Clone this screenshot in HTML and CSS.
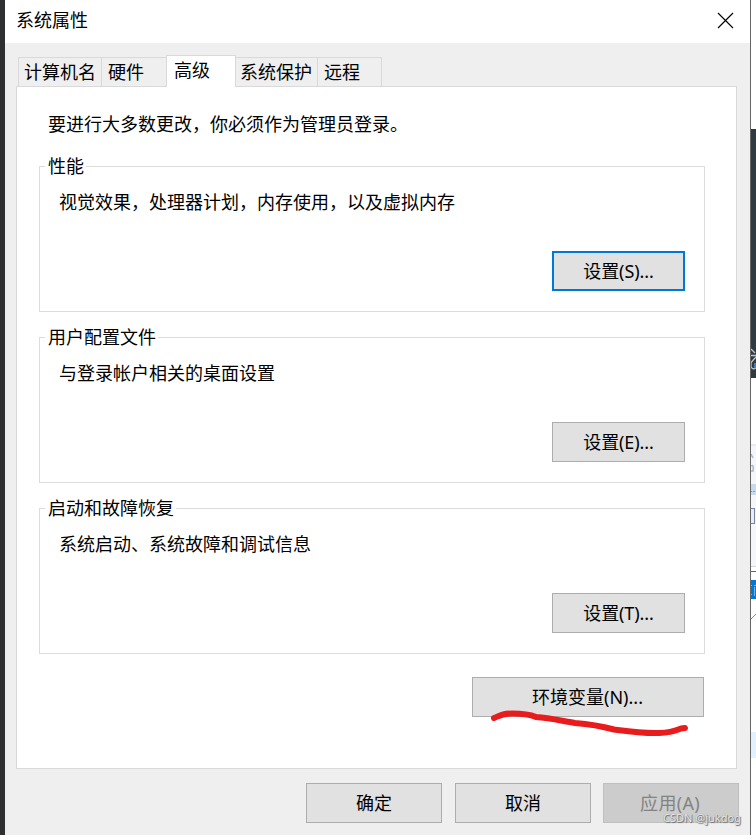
FILE: index.html
```html
<!DOCTYPE html>
<html lang="zh-CN">
<head>
<meta charset="utf-8">
<title>系统属性</title>
<link rel="stylesheet" href="styles.css">
</head>
<body>
<div class="desktop">
  <main class="dialog">
    <header class="titlebar">
      <h1 class="title">系统属性</h1>
      <svg class="close" width="17" height="17" viewBox="0 0 17 17"><path d="M1 1L16 16M16 1L1 16" stroke="#000" stroke-width="1.15" fill="none"/></svg>
    </header>
    <nav class="tabs">
      <span class="tab tab-name">计算机名</span>
      <span class="tab tab-hardware">硬件</span>
      <span class="tab tab-active">高级</span>
      <span class="tab tab-protect">系统保护</span>
      <span class="tab tab-remote">远程</span>
    </nav>
    <section class="panel">
      <p class="intro">要进行大多数更改，你必须作为管理员登录。</p>
      <section class="group">
        <h2 class="legend">性能</h2>
        <p class="desc">视觉效果，处理器计划，内存使用，以及虚拟内存</p>
        <button class="btn btn-settings btn-focus">设置(S)...</button>
      </section>
      <section class="group">
        <h2 class="legend">用户配置文件</h2>
        <p class="desc">与登录帐户相关的桌面设置</p>
        <button class="btn btn-settings">设置(E)...</button>
      </section>
      <section class="group">
        <h2 class="legend">启动和故障恢复</h2>
        <p class="desc">系统启动、系统故障和调试信息</p>
        <button class="btn btn-settings">设置(T)...</button>
      </section>
      <div class="env">
        <button class="btn btn-env">环境变量(N)...</button>
        <svg class="scribble" width="200" height="28" viewBox="490 709 200 28"><path d="M494 718C501 715 503 713.500 512 713.500C525 713.500 530 714.500 536 717C551 718 562 721 575 723C589 724 601 726 614 729.500C629 731.500 642 733.500 659 733C672 732.500 677 730 681 728.500L685 728" fill="none" stroke="#e81c1c" stroke-width="6" stroke-linecap="round" stroke-linejoin="round"/></svg>
      </div>
    </section>
    <footer class="footer">
      <button class="btn btn-foot">确定</button>
      <button class="btn btn-foot btn-cancel">取消</button>
      <button class="btn btn-foot btn-disabled" disabled>应用(A)</button>
      <span class="watermark">CSDN @jukdog</span>
    </footer>
  </main>
  <svg class="backdrop" width="5" height="835" viewBox="751 0 5 835" shape-rendering="crispEdges">
    <rect x="751" width="5" height="835" fill="#fff"/>
    <rect x="751" y="129" width="5" height="249" fill="#303a40"/>
    <g fill="none" stroke="#b9c8d0" stroke-width="1.300" shape-rendering="auto">
      <path d="M751 349L755 353M751 355.500H756M756 357L751 362.500V367Q753 370 755.500 368V364"/>
    </g>
    <rect x="754" y="363" width="2" height="5" fill="#3e83c0"/>
    <rect x="751" y="444" width="5" height="123" fill="#f4f6fa"/>
    <rect x="751" y="444" width="5" height="2" fill="#ececec"/>
    <path d="M751 454L753 458M751 466Q754 464 753 471H751" fill="none" stroke="#a9b5d0" stroke-width="1.500" shape-rendering="auto"/>
    <rect x="751" y="484" width="5" height="11" fill="#c9d9ee"/>
    <path d="M751 491H752M753 491H755" stroke="#8c9dbb"/>
    <path d="M751 508.500H754.500V523.500H751" fill="#e8edf7" stroke="#7185b0"/>
    <rect x="751" y="566" width="5" height="1" fill="#d5d5d5"/>
    <rect x="751" y="571" width="5" height="1" fill="#2878b8"/>
    <rect x="751" y="580" width="5" height="19" fill="#0078d7"/>
    <path d="M751 585H752M751 594H752M754 585H756M754.500 587V596" stroke="#75b5ec"/>
    <path d="M751 619L756 614" stroke="#888" shape-rendering="auto"/>
    <rect x="751" y="732" width="5" height="26" fill="#e3f1ff"/>
  </svg>
</div>
</body>
</html>
```
FILE: styles.css
```css
* {
  box-sizing: border-box;
}

body {
  margin: 0;
  color: #000;
  font: 18px/24px "Noto Sans", "Noto Sans CJK SC", sans-serif;
}

h1, h2, p {
  margin: 0;
  font-size: 18px;
  font-weight: 400;
}

.desktop {
  display: flex;
  width: 756px;
  height: 835px;
  padding-left: 5px;
  overflow: hidden;
  background: #2e2f33;
}

.dialog {
  display: flex;
  flex-direction: column;
  width: 746px;
  border-right: 1px solid #666;
  background: #efefef;
}

.backdrop {
  display: block;
  flex: none;
}

.titlebar {
  display: flex;
  justify-content: space-between;
  height: 43px;
  padding: 8px 16px 0 11px;
  background: #fff;
}

.close {
  margin-top: 4px;
}

.tabs {
  display: flex;
  align-items: flex-end;
  height: 44px;
  padding-left: 13px;
}

.tab {
  height: 30px;
  padding: 2px 0 0 5px;
  border: 1px solid #d9d9d9;
  border-right: 0;
  white-space: nowrap;
}

.tab-name {
  width: 83px;
}

.tab-hardware {
  width: 65px;
  padding-left: 6px;
}

.tab-active {
  z-index: 1;
  width: 70px;
  height: 32px;
  padding-left: 7px;
  border-right: 1px solid #d9d9d9;
  border-bottom: 0;
  background: #fff;
}

.tab-protect {
  width: 81px;
  padding-left: 4px;
  border-left: 0;
}

.tab-remote {
  width: 65px;
  padding-left: 6px;
  border-right: 1px solid #d9d9d9;
}

.panel {
  width: 721px;
  height: 683px;
  margin: -1px 0 0 11px;
  padding: 25px 32px 0 22px;
  border: 1px solid #d9d9d9;
  background: #fff;
}

.intro {
  height: 54px;
  padding-left: 9px;
}

.group {
  display: flex;
  flex-direction: column;
  align-items: flex-start;
  width: 666px;
  height: 146px;
  margin-bottom: 25px;
  padding: 0 19px 20px 5px;
  border: 1px solid #dcdcdc;
}

.legend {
  margin-top: -13px;
  padding: 0 2px 0 3px;
  background: #fff;
}

.desc {
  margin-top: 12px;
  padding-left: 14px;
}

.btn {
  height: 40px;
  padding: 0;
  border: 1px solid #adadad;
  background: #e1e1e1;
  color: #000;
  font: inherit;
  line-height: 38px;
}

.btn-settings {
  align-self: flex-end;
  width: 133px;
  margin-top: auto;
  letter-spacing: -0.1px;
}

.btn-focus {
  border: 2px solid #0078d7;
  line-height: 36px;
}

.env {
  position: relative;
  width: 665px;
  margin-top: -2px;
  text-align: right;
}

.btn-env {
  width: 232px;
  padding-right: 1px;
}

.scribble {
  position: absolute;
  top: 32px;
  left: 451px;
}

.footer {
  position: relative;
  display: flex;
  margin: 14px 0 0 301px;
}

.btn-foot {
  width: 136px;
}

.btn-cancel {
  margin: 0 12px 0 13px;
}

.btn-disabled {
  padding-right: 2px;
  border-color: #bfbfbf;
  background: #ccc;
  color: #838383;
  letter-spacing: 0.3px;
}

.watermark {
  position: absolute;
  top: 27px;
  left: 357px;
  color: #e8e8e8;
  font: 11px/16px "Noto Sans", sans-serif;
  text-shadow: 1px 1px 1px #666, 0 0 1px #888;
  white-space: nowrap;
}
```
